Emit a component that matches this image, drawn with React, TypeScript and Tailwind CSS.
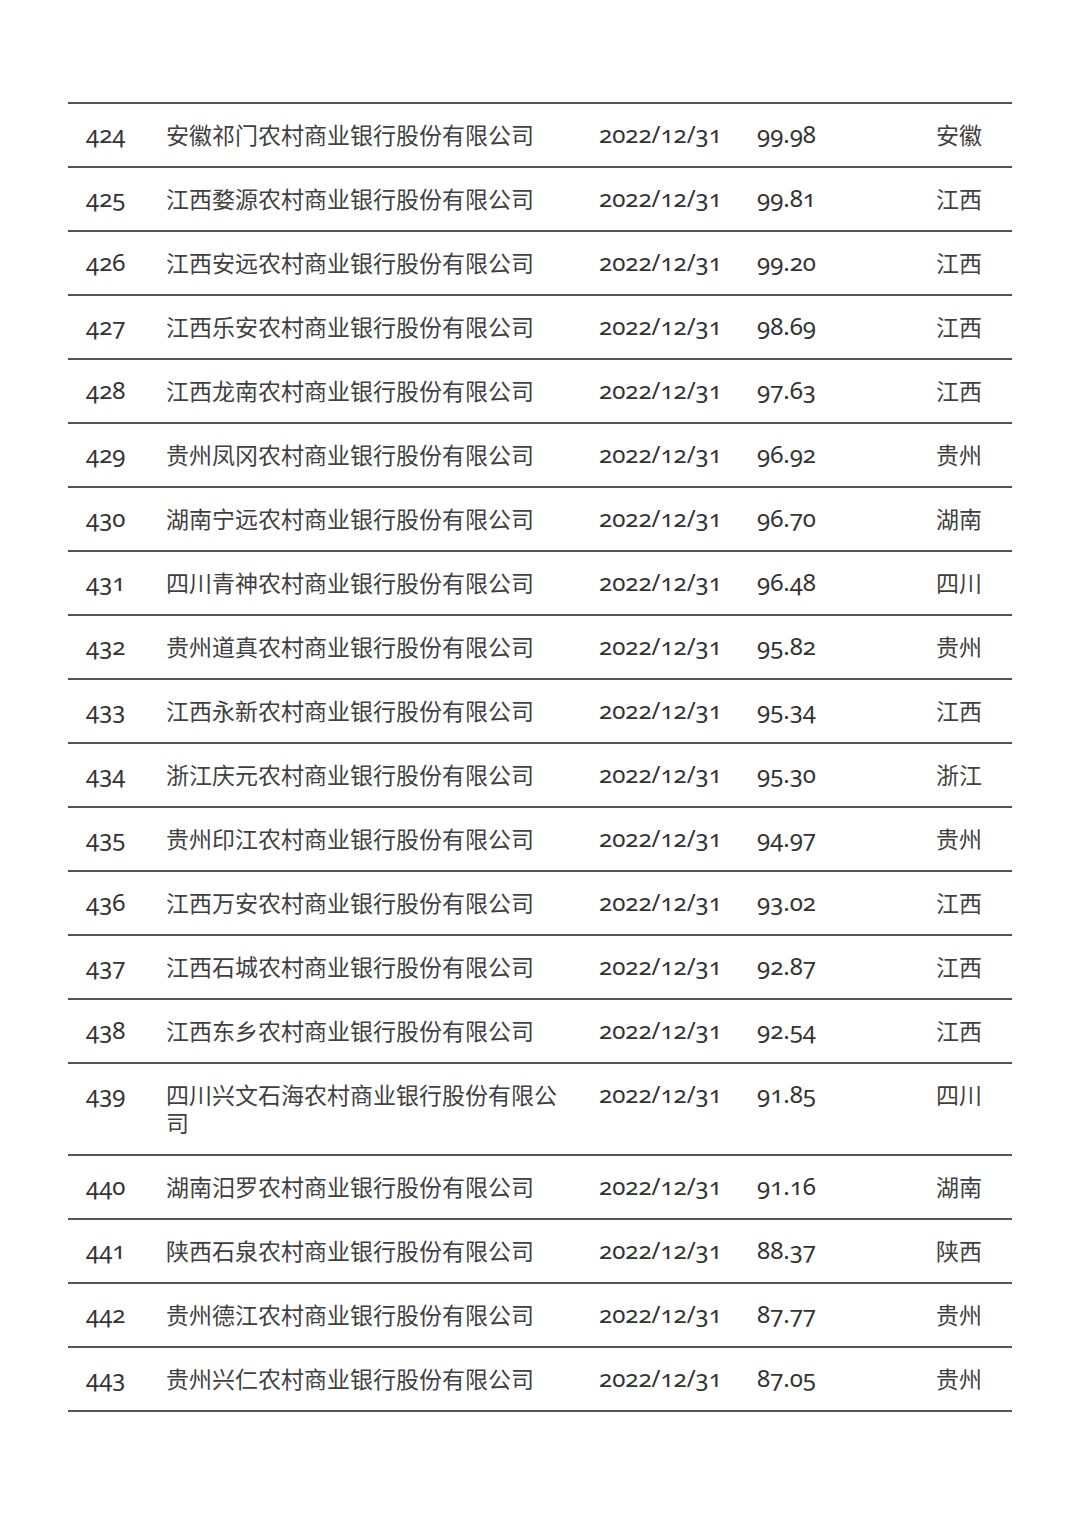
import React from "react";

const rows: [string, React.ReactNode, string, string][] = [
  ["424", "安徽祁门农村商业银行股份有限公司", "99.98", "安徽"],
  ["425", "江西婺源农村商业银行股份有限公司", "99.81", "江西"],
  ["426", "江西安远农村商业银行股份有限公司", "99.20", "江西"],
  ["427", "江西乐安农村商业银行股份有限公司", "98.69", "江西"],
  ["428", "江西龙南农村商业银行股份有限公司", "97.63", "江西"],
  ["429", "贵州凤冈农村商业银行股份有限公司", "96.92", "贵州"],
  ["430", "湖南宁远农村商业银行股份有限公司", "96.70", "湖南"],
  ["431", "四川青神农村商业银行股份有限公司", "96.48", "四川"],
  ["432", "贵州道真农村商业银行股份有限公司", "95.82", "贵州"],
  ["433", "江西永新农村商业银行股份有限公司", "95.34", "江西"],
  ["434", "浙江庆元农村商业银行股份有限公司", "95.30", "浙江"],
  ["435", "贵州印江农村商业银行股份有限公司", "94.97", "贵州"],
  ["436", "江西万安农村商业银行股份有限公司", "93.02", "江西"],
  ["437", "江西石城农村商业银行股份有限公司", "92.87", "江西"],
  ["438", "江西东乡农村商业银行股份有限公司", "92.54", "江西"],
  [
    "439",
    <>
      四川兴文石海农村商业银行股份有限公
      <br />司
    </>,
    "91.85",
    "四川",
  ],
  ["440", "湖南汨罗农村商业银行股份有限公司", "91.16", "湖南"],
  ["441", "陕西石泉农村商业银行股份有限公司", "88.37", "陕西"],
  ["442", "贵州德江农村商业银行股份有限公司", "87.77", "贵州"],
  ["443", "贵州兴仁农村商业银行股份有限公司", "87.05", "贵州"],
];

export default function App() {
  return (
    <div
      className="w-[1080px] min-h-[1528px] bg-white pt-[102px] px-[68px] text-[#3f3f3f] text-[23px] leading-[28px]"
      style={{ fontFamily: '"Noto Sans", "Noto Sans CJK SC", sans-serif' }}
    >
      <div className="border-t-2 border-[#555555]">
        {rows.map(([n, name, score, prov]) => (
          <div
            key={n}
            className="grid grid-cols-[98px_433px_158px_179px_76px] border-b-2 border-[#555555] py-[17px] items-start"
          >
            <div className="pl-[18px] text-[24px] leading-[25px] oldstyle-nums text-[#333333]">{n}</div>
            <div className="w-[410px] whitespace-nowrap">{name}</div>
            <div className="text-[24px] leading-[25px] oldstyle-nums text-[#333333]">2022/12/31</div>
            <div className="text-[24px] leading-[25px] oldstyle-nums text-[#333333]">{score}</div>
            <div>{prov}</div>
          </div>
        ))}
      </div>
    </div>
  );
}
